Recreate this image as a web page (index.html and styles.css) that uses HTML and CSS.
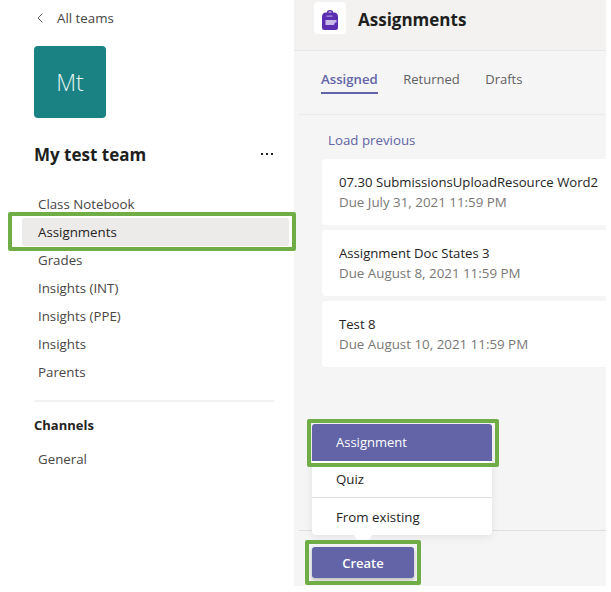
FILE: index.html
```html
<!DOCTYPE html>
<html lang="en">
<head>
    <meta charset="UTF-8">
    <title>Assignments</title>
    <link rel="stylesheet" href="styles.css">
</head>
<body>
    <div class="app">
        <aside class="sidebar">
            <div class="back">
                <svg class="back-icon" width="8" height="12" viewBox="0 0 8 12"><path d="M6.5 1.5 L2 6 L6.5 10.5" fill="none" stroke="#616161" stroke-width="1"/></svg>
                <span>All teams</span>
            </div>
            <div class="avatar">Mt</div>
            <div class="team-row">
                <h2>My test team</h2>
                <span class="dots"><i></i><i></i><i></i></span>
            </div>
            <ul class="nav">
                <li>Class Notebook</li>
                <li class="current">Assignments</li>
                <li>Grades</li>
                <li>Insights (INT)</li>
                <li>Insights (PPE)</li>
                <li>Insights</li>
                <li>Parents</li>
            </ul>
            <div class="divider"></div>
            <h3>Channels</h3>
            <ul class="nav">
                <li>General</li>
            </ul>
        </aside>

        <main class="main">
            <header class="top">
                <div class="app-icon">
                    <svg width="16" height="20" viewBox="0 0 16 20">
                        <path d="M5 3 V2 Q5 0 8 0 Q11 0 11 2 V3 H9.5 V2 Q9.5 1.4 8 1.4 Q6.5 1.4 6.5 2 V3 Z" fill="#5b2db0"/>
                        <path d="M4 2.5 H12 Q16 2.5 16 7 V17.5 Q16 20 13.5 20 H2.5 Q0 20 0 17.5 V7 Q0 2.5 4 2.5 Z" fill="#5b2db0"/>
                        <rect x="4.5" y="5.5" width="6" height="1.3" fill="#a78fdc"/>
                        <path d="M3.5 10 H14.5 V12.5 H13 L12 15 H3.5 Z" fill="#c9baea"/>
                    </svg>
                </div>
                <h1>Assignments</h1>
            </header>
            <nav class="tabs">
                <a class="tab active">Assigned</a>
                <a class="tab">Returned</a>
                <a class="tab">Drafts</a>
            </nav>
            <div class="content">
                <a class="load">Load previous</a>
                <div class="card">
                    <div class="card-title">07.30 SubmissionsUploadResource Word2</div>
                    <div class="card-due">Due July 31, 2021 11:59 PM</div>
                </div>
                <div class="card">
                    <div class="card-title">Assignment Doc States 3</div>
                    <div class="card-due">Due August 8, 2021 11:59 PM</div>
                </div>
                <div class="card">
                    <div class="card-title">Test 8</div>
                    <div class="card-due">Due August 10, 2021 11:59 PM</div>
                </div>
            </div>
            <footer class="bottom">
                <button class="create">Create</button>
            </footer>

            <div class="menu">
                <div class="menu-item selected">Assignment</div>
                <div class="menu-item quiz">Quiz</div>
                <div class="menu-item existing">From existing</div>
                <span class="menu-tail"></span>
            </div>
            <span class="mark mark-menu"></span>
            <span class="mark mark-create"></span>
        </main>
        <span class="mark mark-nav"></span>
    </div>
</body>
</html>
```

FILE: styles.css
```css
*{
    padding: 0;
    margin: 0;
    box-sizing: border-box;
}
html, body{
    height: 100%;
    background-color: white;
}
body{
    font-family: "Open Sans", "Noto Sans", sans-serif;
    font-size: 13.3px;
    color: #252423;
}

.app{
    position: relative;
    display: flex;
    width: 606px;
    height: 586px;
    overflow: hidden;
}

.sidebar{
    width: 294px;
    flex-shrink: 0;
    padding: 0 20px 0 34px;
}
.back{
    display: flex;
    align-items: center;
    height: 36px;
    padding-left: 2px;
    color: #484644;
}
.back-icon{
    margin-right: 13px;
}
.avatar{
    width: 72px;
    height: 72px;
    margin-top: 10px;
    border-radius: 4px;
    background-color: #1b8283;
    color: #e6f3f3;
    font-size: 23px;
    font-weight: 300;
    display: flex;
    align-items: center;
    justify-content: center;
}
.team-row{
    display: flex;
    justify-content: space-between;
    align-items: center;
    height: 24px;
    margin-top: 24px;
}
h2{
    font-size: 17px;
    font-weight: 700;
    color: #201f1e;
}
.dots{
    display: flex;
    gap: 3px;
    padding-right: 1px;
}
.dots i{
    width: 2px;
    height: 2px;
    background-color: #252423;
}
.nav{
    list-style: none;
    margin-top: 24px;
}
.nav li{
    height: 28px;
    line-height: 28px;
    padding-left: 4px;
    color: #484644;
}
.nav li.current{
    margin: 0 -15px 0 -12px;
    padding-left: 16px;
    background-color: #edebe9;
    border-radius: 3px;
    color: #252423;
}
.divider{
    height: 2px;
    margin-top: 14px;
    background-color: #f3f2f1;
}
h3{
    font-size: 13px;
    font-weight: 700;
    color: #252423;
    margin-top: 13px;
    line-height: 20px;
}
h3 + .nav{
    margin-top: 10px;
}

.main{
    position: relative;
    flex: 1;
    display: flex;
    flex-direction: column;
    background-color: #f5f5f5;
}
.top{
    display: flex;
    align-items: flex-start;
    height: 51px;
    padding: 2px 0 0 20px;
    background-color: #f3f2f1;
    border-bottom: 1px solid #e8e7e6;
}
.app-icon{
    width: 32px;
    height: 32px;
    border-radius: 4px;
    background-color: white;
    display: flex;
    align-items: center;
    justify-content: center;
}
.app-icon svg{
    margin: 4px 0 0 -1px;
}
h1{
    font-size: 17px;
    font-weight: 700;
    line-height: 36px;
    color: #201f1e;
    margin-left: 12px;
}
.tabs{
    display: flex;
    gap: 25.5px;
    height: 64px;
    margin-left: 4px;
    padding: 16px 0 0 23px;
    border-bottom: 1px solid #ebebeb;
}
.tab{
    height: 27px;
    line-height: 25px;
    font-size: 13px;
    color: #616161;
}
.tab.active{
    font-size: 13.2px;
    color: #6264a7;
    font-weight: 600;
    border-bottom: 2px solid #6264a7;
}
.content{
    flex: 1;
    padding: 14px 0 0 28px;
}
.load{
    display: block;
    color: #6264a7;
    padding-left: 6px;
    line-height: 22px;
    margin-bottom: 8px;
}
.card{
    height: 66px;
    margin-bottom: 5px;
    padding: 13px 0 0 17px;
    background-color: white;
    border-radius: 4px 0 0 4px;
}
.card-title{
    font-size: 13.15px;
    line-height: 20px;
    color: #252423;
    white-space: nowrap;
}
.card-due{
    font-size: 13.35px;
    line-height: 20px;
    color: #7a7876;
}
.bottom{
    height: 56px;
    margin-left: 5px;
    padding: 16px 0 0 13px;
    border-top: 1px solid #e1dfdd;
}
.create{
    display: block;
    width: 102px;
    height: 31px;
    border: none;
    border-radius: 3px;
    background-color: #6264a7;
    color: white;
    font-family: inherit;
    font-size: 13px;
    font-weight: 600;
    box-shadow: 0 2px 4px rgba(0, 0, 0, 0.25);
}

.menu{
    position: absolute;
    left: 18px;
    top: 424px;
    width: 180px;
    height: 111px;
    border-radius: 4px;
    background-color: white;
    box-shadow: 0 2px 8px rgba(0, 0, 0, 0.08);
}
.menu-item{
    height: 37px;
    line-height: 37px;
    padding-left: 24px;
    color: #252423;
}
.menu-item.selected{
    background-color: #6264a7;
    border-radius: 3px 3px 0 0;
    color: white;
    font-size: 13px;
}
.menu-item.quiz{
    border-bottom: 1px solid #e1dfdd;
    line-height: 36px;
}
.menu-item.existing{
    line-height: 39px;
}
.menu-tail{
    position: absolute;
    left: 42px;
    bottom: -5px;
    width: 18px;
    height: 6px;
    background-color: white;
    border-radius: 0 0 6px 6px;
}

.mark{
    position: absolute;
    border: 4px solid #70ad47;
    border-radius: 2px;
}
.mark-nav{
    left: 8px;
    top: 212px;
    width: 288px;
    height: 39px;
}
.mark-menu{
    left: 13px;
    top: 419px;
    width: 192px;
    height: 48px;
}
.mark-create{
    left: 11px;
    top: 540px;
    width: 116px;
    height: 45px;
}
```
